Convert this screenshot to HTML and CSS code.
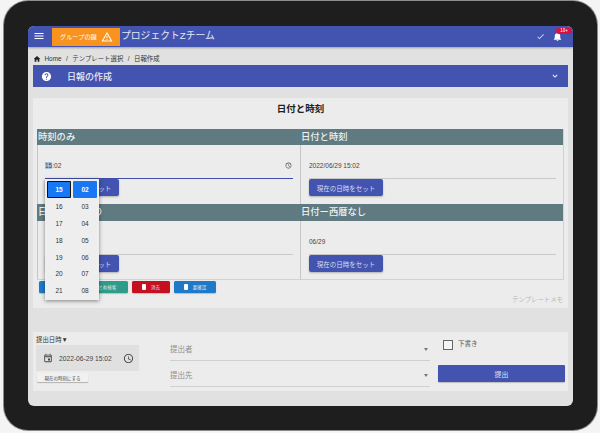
FILE: index.html
```html
<!DOCTYPE html>
<html lang="ja">
<head>
<meta charset="utf-8">
<title>日報の作成</title>
<link rel="stylesheet" href="styles.css">
</head>
<body>
<div class="tablet">
  <div class="screen">
    <header class="topbar">
      <svg class="menu-icon" viewBox="0 0 24 24"><path d="M3 18h18v-2H3zm0-5h18v-2H3zm0-7v2h18V6z"/></svg>
      <div class="group-chip"><span>グループの鍵</span>
        <svg class="warn-icon" viewBox="0 0 24 24"><path d="M12 5.99 19.53 19H4.47zM12 2 1 21h22zm1 14h-2v2h2zm0-6h-2v4h2z"/></svg>
      </div>
      <div class="team">プロジェクトZチーム</div>
      <svg class="check-icon" viewBox="0 0 24 24"><path d="M9 16.17 4.83 12l-1.42 1.41L9 19 21 7l-1.41-1.41z"/></svg>
      <div class="bell">
        <svg viewBox="0 0 24 24"><path d="M12 22c1.1 0 2-.9 2-2h-4c0 1.1.9 2 2 2m6-6v-5c0-3.07-1.63-5.64-4.5-6.32V4c0-.83-.67-1.5-1.5-1.5s-1.5.67-1.5 1.5v.68C7.64 5.36 6 7.92 6 11v5l-2 2v1h16v-1z"/></svg>
        <span class="badge">10+</span>
      </div>
    </header>

    <nav class="crumbs">
      <svg viewBox="0 0 24 24"><path d="M10 20v-6h4v6h5v-8h3L12 3 2 12h3v8z"/></svg>
      <span>Home</span><span>/</span><span>テンプレート選択</span><span>/</span><span>日報作成</span>
    </nav>

    <section class="title-bar">
      <svg class="help-icon" viewBox="0 0 24 24"><path d="M12 2C6.48 2 2 6.48 2 12s4.480 10 10 10 10-4.480 10-10S17.520 2 12 2m1 17h-2v-2h2zm2.070-7.750-.9.920C13.450 12.900 13 13.500 13 15h-2v-.5c0-1.100.45-2.100 1.170-2.830l1.240-1.260c.37-.36.59-.86.59-1.410 0-1.100-.9-2-2-2s-2 .9-2 2H8c0-2.210 1.790-4 4-4s4 1.790 4 4c0 .88-.36 1.680-.93 2.250"/></svg>
      <h1>日報の作成</h1>
      <svg class="chev-icon" viewBox="0 0 24 24"><path d="M7.410 8.590 12 13.170l4.590-4.580L18 10l-6 6-6-6z"/></svg>
    </section>

    <section class="card">
      <h2>日付と時刻</h2>
      <div class="grid">
        <div class="cell">
          <div class="cell-head">時刻のみ</div>
          <div class="cell-body">
            <div class="field active"><span><mark>15</mark>:02</span>
              <svg viewBox="0 0 24 24"><path d="M11.990 2C6.470 2 2 6.480 2 12s4.470 10 9.990 10C17.520 22 22 17.520 22 12S17.520 2 11.990 2M12 20c-4.420 0-8-3.580-8-8s3.580-8 8-8 8 3.580 8 8-3.580 8-8 8m.5-13H11v6l5.250 3.150.75-1.230-4.500-2.670z"/></svg>
            </div>
            <button class="set-btn">現在の日時をセット</button>
            <div class="picker">
              <div class="picker-col">
                <span class="on focus">15</span><span>16</span><span>17</span><span>18</span><span>19</span><span>20</span><span>21</span>
              </div>
              <div class="picker-col">
                <span class="on">02</span><span>03</span><span>04</span><span>05</span><span>06</span><span>07</span><span>08</span>
              </div>
            </div>
          </div>
        </div>
        <div class="cell">
          <div class="cell-head">日付と時刻</div>
          <div class="cell-body">
            <div class="field"><span>2022/06/29 15:02</span></div>
            <button class="set-btn">現在の日時をセット</button>
          </div>
        </div>
        <div class="cell">
          <div class="cell-head">日付ー西暦あり</div>
          <div class="cell-body">
            <div class="field"><span>2022/06/29</span></div>
            <button class="set-btn">現在の日時をセット</button>
          </div>
        </div>
        <div class="cell">
          <div class="cell-head">日付ー西暦なし</div>
          <div class="cell-body">
            <div class="field"><span>06/29</span></div>
            <button class="set-btn">現在の日時をセット</button>
          </div>
        </div>
      </div>
      <div class="actions">
        <button class="act blue wide">一時保存</button>
        <button class="act green">まとめ検索</button>
        <button class="act red"><i></i>消去</button>
        <button class="act blue"><i></i>要確認</button>
      </div>
      <div class="memo">テンプレートメモ</div>
    </section>

    <footer class="submit-panel">
      <div class="when">
        <div class="when-label">提出日時▼</div>
        <div class="when-box">
          <svg class="cal" viewBox="0 0 24 24"><path d="M19 4h-1V2h-2v2H8V2H6v2H5c-1.110 0-2 .9-2 2v14c0 1.100.89 2 2 2h14c1.100 0 2-.9 2-2V6c0-1.100-.9-2-2-2m0 16H5V10h14zm0-12H5V6h14zm-2 5h-5v5h5z"/></svg>
          <span>2022-06-29 15:02</span>
          <svg class="clock" viewBox="0 0 24 24"><path d="M11.990 2C6.470 2 2 6.480 2 12s4.470 10 9.990 10C17.520 22 22 17.520 22 12S17.520 2 11.990 2M12 20c-4.420 0-8-3.580-8-8s3.580-8 8-8 8 3.580 8 8-3.580 8-8 8m.5-13H11v6l5.250 3.150.75-1.230-4.500-2.670z"/></svg>
        </div>
        <button class="now-btn">現在の時刻にする</button>
      </div>
      <div class="selects">
        <div class="select"><span>提出者</span><b></b></div>
        <div class="select"><span>提出先</span><b></b></div>
      </div>
      <div class="send">
        <label class="draft"><i></i><span>下書き</span></label>
        <button class="send-btn">提出</button>
      </div>
    </footer>
  </div>
</div>
</body>
</html>
```
FILE: styles.css
```css
* { box-sizing: border-box; }
html, body { margin: 0; height: 100%; }
body {
  width: 600px;
  height: 433px;
  overflow: hidden;
  background: #f4f4f4;
  font-family: "Liberation Sans", "Noto Sans CJK JP", sans-serif;
  color: #333;
}
button { font-family: inherit; border: 0; padding: 0; }
h1, h2 { margin: 0; font-weight: 500; }

.tablet {
  width: 593px;
  height: 429px;
  margin: 1px 0 0 4px;
  padding: 25px 24px 24px 24px;
  background: #1e1e1e;
  border-radius: 24px;
  box-shadow: 0 0 0 1px #8c8c8c;
  filter: blur(.35px);
}
.screen {
  height: 380px;
  background: #e1e1e1;
  border-radius: 6px;
  overflow: hidden;
  display: flex;
  flex-direction: column;
}

.topbar {
  height: 21px;
  flex: none;
  display: flex;
  align-items: center;
  background: #4354b0;
  color: #fff;
  padding: 0 0 1px 5px;
  box-shadow: 0 1px 2px rgba(0,0,0,.3);
  position: relative;
}
.menu-icon { width: 12px; height: 12px; fill: #fff; }
.group-chip {
  margin: 1px 0 0 7px;
  width: 68px;
  height: 18px;
  flex: none;
  display: flex;
  align-items: center;
  justify-content: space-between;
  padding: 0 7px 0 8px;
  background: #f7931e;
  font-size: 6.2px;
}
.warn-icon { width: 12px; height: 12px; fill: #fff; }
.team { margin: 0 0 2px 1px; font-size: 9.8px; flex: 1; color: #e4e6f5; }
.check-icon { width: 9px; height: 9px; fill: #d5d8ee; margin-right: 7.5px; }
.bell { width: 10px; height: 11px; margin-right: 11px; position: relative; }
.bell svg { display: block; width: 11px; height: 11px; fill: #fff; }
.badge {
  position: absolute;
  top: -3px;
  left: 4px;
  width: 16px;
  height: 6px;
  border-radius: 3px;
  background: #d8123f;
  font-size: 4.5px;
  line-height: 6px;
  text-align: center;
}

.crumbs {
  height: 18px;
  flex: none;
  display: flex;
  align-items: flex-end;
  gap: 4.5px;
  padding: 0 0 2px 5px;
  font-size: 6.4px;
  line-height: 8px;
  color: #333;
}
.crumbs svg { width: 8px; height: 8px; fill: #222; margin-right: -1px; }

.title-bar {
  height: 22px;
  flex: none;
  margin: 0 5px;
  display: flex;
  align-items: center;
  padding: 0 8px 0 8px;
  background: #4354b0;
  color: #e8e9f6;
}
.help-icon { width: 11px; height: 11px; fill: #fff; }
.title-bar h1 { font-size: 9px; margin-left: 15px; flex: 1; font-weight: 500; }
.chev-icon { width: 10px; height: 10px; fill: #fff; }

.card {
  height: 210px;
  flex: none;
  margin: 11px 5px 0;
  padding: 0 4px;
  background: #ececec;
}
.card h2 {
  height: 31px;
  line-height: 22px;
  text-align: center;
  font-size: 9.5px;
  font-weight: 700;
  color: #222;
}
.grid {
  display: grid;
  grid-template-columns: 263px 264px;
  grid-template-rows: 75px 75px;
  border-bottom: 1px solid #d2d2d2;
}
.cell { border-left: 1px solid #c6c6c6; min-width: 0; }
.cell:nth-child(2n) { border-right: 1px solid #d2d2d2; }
.cell-head {
  height: 16px;
  margin-left: -1px;
  background: #5f7a80;
  color: #eef1f1;
  font-size: 9.3px;
  line-height: 16px;
  font-weight: 500;
  padding-left: 1px;
}
.cell:nth-child(n+3) .cell-head { height: 17px; line-height: 17px; }
.cell-body { position: relative; padding: 8px 7px 0 7px; }
.cell:nth-child(2n) .cell-body { padding: 8px 7px 0 8px; }
.field {
  height: 26px;
  border-bottom: 1px solid #c9c9c9;
  display: flex;
  align-items: center;
  justify-content: space-between;
  font-size: 6.5px;
  color: #444;
}
.field.active { border-bottom-color: #3f4fa8; }
.field svg { width: 7px; height: 7px; fill: #444; margin-right: 1px; }
mark { background: #a9c4ec; color: #444; }
.set-btn {
  display: block;
  width: 74px;
  height: 17px;
  border-radius: 2px;
  background: #4354b0;
  color: #d9dcf0;
  font-size: 6.5px;
  box-shadow: 0 1px 2px rgba(0,0,0,.25);
}

.picker {
  position: absolute;
  z-index: 2;
  top: 34px;
  left: 7px;
  width: 54px;
  height: 121px;
  padding: 2px;
  display: flex;
  gap: 2px;
  background: #eee;
  box-shadow: 0 1px 4px rgba(0,0,0,.45);
}
.picker-col { width: 24px; display: flex; flex-direction: column; }
.picker-col span {
  height: 16.900px;
  flex: none;
  display: flex;
  align-items: center;
  justify-content: center;
  font-size: 6.500px;
  color: #333;
}
.picker-col .on { background: #1878f3; color: #fff; font-weight: 700; border-radius: 1px; }
.picker-col .focus { outline: 1px solid #111; outline-offset: -1px; }

.actions { display: flex; gap: 4px; margin: 1px 0 0 2px; height: 12px; }
.act {
  width: 38px;
  height: 12px;
  display: flex;
  align-items: center;
  justify-content: center;
  gap: 5px;
  border-radius: 1.500px;
  color: #e3e9ee;
  font-size: 4.500px;
  box-shadow: 0 1px 1px rgba(0,0,0,.2);
}
.act i { width: 4px; height: 6px; background: #fff; border-radius: 1px; }
.act.blue { background: #1e79c9; }
.act.red { background: #c4101f; }
.act.green { background: #2d9c8a; width: 46px; }
.act.wide { width: 39px; }
.act:last-child { width: 42px; }

.memo { margin: 2px 1px 0 0; text-align: right; font-size: 6.400px; line-height: 10px; color: #b5b5b5; }

.submit-panel {
  height: 59px;
  flex: none;
  margin: 24px 5px 0;
  display: flex;
  background: #ececec;
}
.when { width: 137px; flex: none; padding: 3px 0 0 3px; }
.when-label { font-size: 6.400px; line-height: 10px; color: #333; }
.when-box {
  width: 103px;
  height: 26px;
  display: flex;
  align-items: center;
  padding: 0 5px 0 7px;
  background: #e0e0e0;
  font-size: 6.700px;
  color: #444;
}
.when-box span { flex: 1; margin-left: 6px; }
.when-box .cal { width: 10px; height: 10px; fill: #444; }
.when-box .clock { width: 11px; height: 11px; fill: #444; }
.now-btn {
  display: block;
  width: 51px;
  height: 9px;
  margin: 2px 0 0 1px;
  background: #f1f1f1;
  font-size: 4.500px;
  color: #444;
  border-radius: 1px;
  box-shadow: 0 1px 1px rgba(0,0,0,.25);
}
.selects { width: 260px; flex: none; padding-top: 3px; }
.select {
  height: 26px;
  border-bottom: 1px solid #d0d0d0;
  display: flex;
  align-items: center;
  justify-content: space-between;
  padding-right: 2px;
  font-size: 7.500px;
  color: #8f8f8f;
}
.select span { margin-top: 1px; }
.select b {
  margin-top: 3px;
  width: 0;
  height: 0;
  border: 2.500px solid transparent;
  border-top: 3px solid #777;
  border-bottom: 0;
}
.send { width: 127px; flex: none; margin-left: 8px; display: flex; flex-direction: column; }
.draft {
  height: 33px;
  display: flex;
  align-items: flex-start;
  gap: 5px;
  padding: 8px 0 0 5px;
  font-size: 6.500px;
  color: #555;
}
.draft i { width: 10px; height: 10px; border: 1px solid #666; background: #f4f4f4; }
.draft span { line-height: 8px; }
.send-btn {
  height: 17px;
  background: #4354b0;
  color: #dfe2f3;
  font-size: 7px;
  border-radius: 1px;
  box-shadow: 0 1px 1px rgba(0,0,0,.2);
}
```
